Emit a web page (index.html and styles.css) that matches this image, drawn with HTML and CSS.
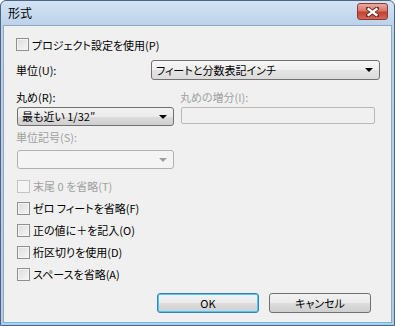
FILE: index.html
```html
<!DOCTYPE html>
<html lang="ja">
<head>
  <meta charset="UTF-8">
  <link rel="stylesheet" href="styles.css">
  <title>形式</title>
</head>
<body>
  <div class="window">
    <div class="titlebar">
      <span class="title">形式</span>
      <div class="close-btn">
        <svg width="13" height="10" viewBox="0 0 13 10">
          <path d="M2 1.5 L11 8.5 M11 1.5 L2 8.5" stroke="#5a2a26" stroke-width="4" stroke-linecap="square"/>
          <path d="M2.5 2 L10.5 8 M10.5 2 L2.5 8" stroke="#ffffff" stroke-width="2.2" stroke-linecap="square"/>
        </svg>
      </div>
    </div>

    <div class="client">
      <label class="check first-check"><span class="box"></span>プロジェクト設定を使用(P)</label>

      <div class="unit-row">
        <span class="label">単位(U):</span>
        <div class="combo wide">フィートと分数表記インチ<span class="arrow"></span></div>
      </div>

      <div class="pair-labels">
        <span class="label">丸め(R):</span>
        <span class="label disabled">丸めの増分(I):</span>
      </div>
      <div class="pair-fields">
        <div class="combo">最も近い 1/32&Prime;<span class="arrow"></span></div>
        <div class="textbox"></div>
      </div>

      <div class="symbol-label label disabled">単位記号(S):</div>
      <div class="combo combo-disabled"><span class="arrow"></span></div>

      <div class="checks">
        <label class="check disabled"><span class="box"></span>末尾 0 を省略(T)</label>
        <label class="check"><span class="box"></span>ゼロ フィートを省略(F)</label>
        <label class="check"><span class="box"></span>正の値に＋を記入(O)</label>
        <label class="check"><span class="box"></span>桁区切りを使用(D)</label>
        <label class="check"><span class="box"></span>スペースを省略(A)</label>
      </div>

      <div class="buttons">
        <button class="btn default">OK</button>
        <button class="btn">キャンセル</button>
      </div>
    </div>
  </div>
</body>
</html>
```

FILE: styles.css
```css
body {
  margin: 0;
  font-family: "Noto Sans CJK JP", sans-serif;
  font-size: 11px;
  font-feature-settings: "palt";
  color: #000;
  background: #ffffff;
}

.window {
  width: 395px;
  height: 326px;
  box-sizing: border-box;
  border: 1px solid #4a6585;
  border-radius: 6px 6px 0 0;
  background: linear-gradient(#d3e3f4, #bad1ea 26px, #b3cbe6);
  display: flex;
  flex-direction: column;
}

.titlebar {
  height: 24px;
  display: flex;
  align-items: center;
  justify-content: space-between;
  padding: 0 6px 0 7px;
}

.title {
  font-size: 12px;
  color: #000;
  margin-top: -2px;
}

.close-btn {
  width: 31px;
  height: 17px;
  margin-top: -3px;
  box-sizing: border-box;
  border: 1px solid #8a3a33;
  border-radius: 3px;
  background: linear-gradient(#e9aaa1, #d7786c 45%, #c4412f 55%, #d1685a);
  display: flex;
  align-items: center;
  justify-content: center;
}

.client {
  flex: 1;
  margin: 0 2px 2px 2px;
  border: 1px solid #8ea8c6;
  border-bottom-color: #5cc4e6;
  background-color: #f0f0f0;
  padding: 12px 12px 0 12px;
  display: flex;
  flex-direction: column;
}

.label {
  line-height: 14px;
}

.disabled {
  color: #a0a0a0;
}

/* checkboxes */
.check {
  display: flex;
  align-items: center;
  height: 13px;
  white-space: nowrap;
}

.check .box {
  width: 13px;
  height: 13px;
  box-sizing: border-box;
  border: 1px solid #8e8f8f;
  background: linear-gradient(135deg, #dcdcdc, #f6f6f6);
  box-shadow: inset 0 0 0 1px #f4f4f4;
  margin-right: 3px;
  flex-shrink: 0;
}

.check.disabled .box {
  border-color: #c4c4c4;
  background: #f4f4f4;
}

/* combo boxes */
.unit-row {
  display: flex;
  align-items: center;
  margin-top: 9px;
  height: 20px;
}

.unit-row .label {
  width: 135px;
  flex-shrink: 0;
}

.combo {
  position: relative;
  box-sizing: border-box;
  height: 19px;
  border: 1px solid #707070;
  border-radius: 3px;
  background: linear-gradient(#f2f2f2, #ebebeb 50%, #dddddd 51%, #cfcfcf);
  padding: 0 18px 0 4px;
  line-height: 17px;
  white-space: nowrap;
}

.combo.wide {
  width: 229px;
  flex-shrink: 0;
  height: 20px;
  line-height: 18px;
  background: linear-gradient(#f6f6f6, #eeeeee 50%, #e4e4e4 51%, #dcdcdc);
}

.arrow {
  position: absolute;
  right: 6px;
  top: 50%;
  margin-top: -2px;
  width: 0;
  height: 0;
  border-left: 4px solid transparent;
  border-right: 4px solid transparent;
  border-top: 4px solid #000;
}

.combo-disabled {
  width: 157px;
  margin-left: 1px;
  margin-top: 6px;
  border-color: #adb2b5;
  background: #f4f4f4;
}

.combo-disabled .arrow {
  border-top-color: #a0a0a0;
}

.pair-labels {
  display: grid;
  grid-template-columns: 164px 1fr;
  margin-top: 10px;
  height: 14px;
}

.pair-fields {
  display: grid;
  grid-template-columns: 157px 194px;
  column-gap: 7px;
  margin-top: 3px;
  margin-left: 1px;
  align-items: start;
}

.textbox {
  height: 17px;
  box-sizing: border-box;
  border: 1px solid #b5b8ba;
  border-radius: 2px;
  background: #f0f0f0;
}

.symbol-label {
  margin-top: 4px;
  height: 14px;
}

.checks {
  margin-top: 6px;
  display: flex;
  flex-direction: column;
}

.checks .check {
  height: 22px;
  margin-left: 1px;
}

/* buttons */
.buttons {
  display: flex;
  justify-content: flex-end;
  gap: 10px;
  margin-top: 8px;
  padding-right: 8px;
}

.btn {
  width: 102px;
  height: 20px;
  border: 1px solid #707070;
  border-radius: 3px;
  background: linear-gradient(#f2f2f2, #ebebeb 50%, #dddddd 51%, #cfcfcf);
  font-family: "Noto Sans CJK JP", sans-serif;
  font-size: 11px;
  font-feature-settings: "palt";
  padding: 0;
  color: #000;
}

.btn.default {
  border-color: #3c7fb1;
  box-shadow: inset 0 0 0 1px #48c8f4;
}
```
